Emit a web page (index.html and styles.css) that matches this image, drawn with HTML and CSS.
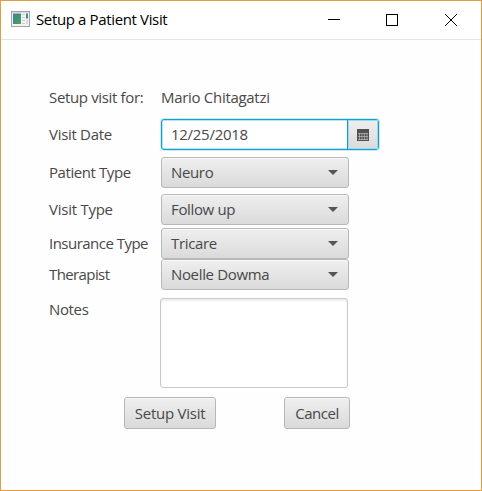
FILE: index.html
```html
<!DOCTYPE html>
<html lang="en">
<head>
<meta charset="utf-8">
<title>Setup a Patient Visit</title>
<link rel="stylesheet" href="styles.css">
</head>
<body>
<div class="window">
  <header class="titlebar">
    <svg class="app-icon" width="20" height="16" viewBox="0 0 20 16">
      <defs><linearGradient id="pane" x1="0" y1="0" x2="1" y2="1"><stop offset="0" stop-color="#4b7fa5"/><stop offset=".5" stop-color="#3f9279"/><stop offset="1" stop-color="#55a34e"/></linearGradient></defs>
      <rect x=".5" y=".5" width="18" height="15" fill="#f3f3f3" stroke="#a0a4a8"/>
      <path d="M1 1.5H18" stroke="#d5dadd"/>
      <rect x="2" y="2.500" width="8" height="10.500" fill="url(#pane)"/>
      <path d="M11 3.5h3M11 6.5h3M11 9.5h3M11 12.5h3" stroke="#c9cccf"/>
      <path d="M16 2.500v5" stroke="#47888e" stroke-width="2"/><path d="M16 9v4" stroke="#d8dadb" stroke-width="2"/>
    </svg>
    <h1 class="title">Setup a Patient Visit</h1>
    <svg class="window-controls" width="130" height="14" viewBox="0 0 130 14" fill="none" stroke="#000">
      <path d="M0 6.5H12"/><rect x="58.5" y="1.500" width="11" height="11"/><path d="M117 1l12 12M129 1l-12 12"/>
    </svg>
  </header>
  <main class="form">
    <div class="row row-name"><span class="label l-for">Setup visit for:</span><span class="value v-name">Mario Chitagatzi</span></div>
    <div class="row row-date"><span class="label l-date">Visit Date</span>
      <div class="datepicker"><span class="date-text">12/25/2018</span>
        <span class="date-button"><svg width="12" height="12" viewBox="0 0 12 12"><path fill="#505050" d="M0 0h12v12H0z"/><path d="M1 4.500h10M1 7.500h10M1 10.500h10M2.500 4v7M5 4v7M7.500 4v7M10 4v7" stroke="#bcbcbc" stroke-width=".7"/></svg></span>
      </div>
    </div>
    <div class="row row-patient"><span class="label l-patient">Patient Type</span><div class="combo"><span class="v-neuro">Neuro</span><i class="arrow"></i></div></div>
    <div class="row row-visit"><span class="label l-visit">Visit Type</span><div class="combo"><span class="v-follow">Follow up</span><i class="arrow"></i></div></div>
    <div class="row row-insurance"><span class="label l-insurance">Insurance Type</span><div class="combo"><span class="v-tricare">Tricare</span><i class="arrow"></i></div></div>
    <div class="row row-therapist"><span class="label l-therapist">Therapist</span><div class="combo"><span class="v-noelle">Noelle Dowma</span><i class="arrow"></i></div></div>
    <div class="row row-notes"><span class="label l-notes">Notes</span><div class="notes"></div></div>
    <div class="actions"><button class="button submit">Setup Visit</button><button class="button cancel">Cancel</button></div>
  </main>
</div>
</body>
</html>
```
FILE: styles.css
```css
* { box-sizing: border-box; }
body { margin: 0; background: #fff; font: 15px/20px "Open Sans", "Noto Sans", sans-serif; color: #484848; }
.window { width: 482px; height: 491px; border: 1px solid #e29d43; background: #fefefe; overflow: hidden; }
.titlebar { display: flex; align-items: center; height: 39px; padding: 0 23px 0 10px; border-bottom: 1px solid #e4e4e4; background: #fff; }
.app-icon { flex: none; margin-top: -2px; }
.title { margin: 0 auto 0 5px; padding-bottom: 2px; font-size: 15px; font-weight: 400; color: #000; letter-spacing: -.36px; white-space: nowrap; }
.window-controls { flex: none; }
.form { padding: 42px 0 0 48px; }
.row { display: flex; align-items: center; height: 31px; white-space: nowrap; }
.label { width: 112px; flex: none; padding-bottom: 2px; letter-spacing: -.35px; }
.value { padding-bottom: 2px; letter-spacing: -.3px; }
.l-date { letter-spacing: -.3px; }
.l-patient { letter-spacing: -.42px; }
.l-visit { letter-spacing: -.25px; }
.l-insurance { letter-spacing: -.52px; }
.l-therapist { letter-spacing: -.6px; }
.row-date { margin-top: 6px; }
.row-patient { margin-top: 7px; }
.row-visit { margin-top: 6px; }
.row-insurance { margin-top: 3px; }
.row-notes { margin-top: 8px; height: 90px; align-items: flex-start; }
.l-notes { padding-top: 1px; }
.combo { display: flex; align-items: center; justify-content: space-between; width: 188px; height: 31px; padding: 0 10px 0 9px; border: 1px solid #b8b8b8; border-radius: 3px; background: linear-gradient(#efefef, #dadada); box-shadow: inset 0 1px #f8f8f8; letter-spacing: -.35px; }
.combo span { padding-bottom: 2px; }
.arrow { border: 5px solid transparent; border-top-color: #555; border-bottom: 0; }
.datepicker { display: flex; width: 218px; height: 31px; border: 1px solid #169dcc; border-radius: 3px; background: #fff; box-shadow: 0 0 0 1px #c9edf8, inset 0 0 0 1px #b5e4f3; }
.date-text { width: 185px; padding: 4px 9px; letter-spacing: -.28px; }
.date-button { display: flex; flex: 1; align-items: center; justify-content: center; border-left: 1px solid #169dcc; background: linear-gradient(#efefef, #dadada); box-shadow: inset 0 0 0 1px #9bd9ee; }
.notes { width: 188px; height: 90px; margin-left: -1px; border: 1px solid #c9c9c9; border-radius: 3px; background: #fff; box-shadow: inset 0 2px 2px #ececec; }
.actions { display: flex; justify-content: space-between; width: 226px; margin: 9px 0 0 75px; }
.button { height: 32px; padding: 0 0 1px; border: 1px solid #b6b6b6; border-radius: 3px; background: linear-gradient(#efefef, #dadada); box-shadow: inset 0 1px #f8f8f8; color: #484848; font: inherit; letter-spacing: -.25px; }
.submit { width: 92px; }
.cancel { width: 66px; letter-spacing: -.5px; }
```
